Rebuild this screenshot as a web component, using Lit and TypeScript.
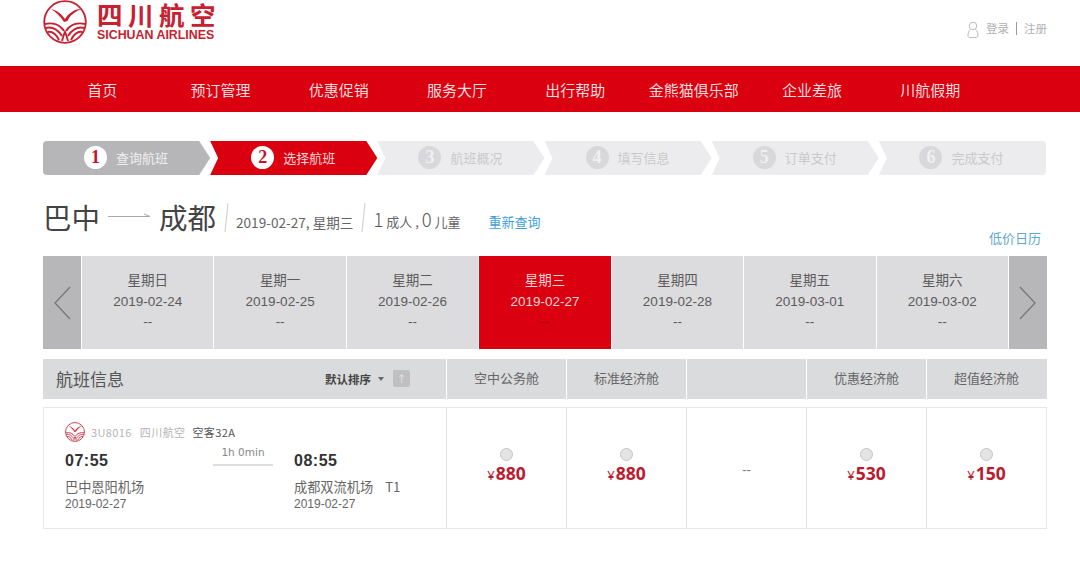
import { LitElement, html, css, svg } from "lit";
import { customElement } from "lit/decorators.js";

const NAV = ["首页", "预订管理", "优惠促销", "服务大厅", "出行帮助", "金熊猫俱乐部", "企业差旅", "川航假期"];
const STEPS = ["查询航班", "选择航班", "航班概况", "填写信息", "订单支付", "完成支付"];
const DAYS = [
  ["星期日", "2019-02-24"],
  ["星期一", "2019-02-25"],
  ["星期二", "2019-02-26"],
  ["星期三", "2019-02-27"],
  ["星期四", "2019-02-28"],
  ["星期五", "2019-03-01"],
  ["星期六", "2019-03-02"],
];
const CABINS = ["空中公务舱", "标准经济舱", "", "优惠经济舱", "超值经济舱"];
const PRICES = ["880", "880", "", "530", "150"];

const logo = (size: number) => html`<svg class="logo" width=${size} height=${size} viewBox="0 0 44 44" fill="none">
  ${svg`<circle cx="22" cy="22" r="20.8" stroke="#c8202f" stroke-width="1.800" fill="#fff"/>
  <path d="M8 9 C13 10 18 13 22 19 C25 14 31 9 38 9 C32 12 27 15 24.500 21 L21 22 C17 16 13 12 8 9Z" fill="#c8202f"/>
  <g stroke="#c8202f" stroke-width="1.900" fill="none">
    <path d="M2 24 C10 22 17 25 21 31"/>
    <path d="M2.500 28 C10 26 15 30 19 36"/>
    <path d="M4.500 32 C9 31 13 34 16 40"/>
    <path d="M42 24 C34 22 27 25 23 31"/>
    <path d="M41.500 28 C34 26 29 30 25 36"/>
    <path d="M39.500 32 C35 31 31 34 28 40"/>
    <path d="M19 41 C20 37 21 34 22 32 C23 34 24 37 25 41"/>
  </g>`}
</svg>`;

@customElement("app-root")
export class AppRoot extends LitElement {
  static styles = css`
    :host {
      display: block;
      width: 1080px;
      height: 567px;
      overflow: hidden;
      background: #fff;
      font-family: "Noto Sans CJK SC", "Liberation Sans", sans-serif;
      color: #555;
      font-size: 13px;
    }
    .top {
      height: 66px;
      box-sizing: border-box;
      padding: 0 33px 0 43px;
      display: flex;
      justify-content: space-between;
    }
    .brand {
      display: flex;
      gap: 10px;
      align-items: flex-start;
    }
    .brand-text {
      display: flex;
      flex-direction: column;
    }
    .brand-cn {
      font-size: 25.500px;
      line-height: 27px;
      height: 27px;
      font-weight: 700;
      color: #c8202f;
      letter-spacing: 5.500px;
      white-space: nowrap;
    }
    .brand-en {
      font-family: "Liberation Sans", sans-serif;
      font-size: 12.400px;
      line-height: 13px;
      margin-top: 2px;
      font-weight: 700;
      color: #c8202f;
      white-space: nowrap;
    }
    .user {
      display: flex;
      align-items: center;
      height: 20px;
      margin-top: 18px;
      font-size: 11.500px;
      color: #b0b0b0;
      gap: 4px;
    }
    .user i {
      width: 1px;
      height: 13px;
      background: #999;
      margin: 0 3px;
    }
    .user svg {
      margin-right: 3px;
      margin-top: 3px;
    }
    nav {
      height: 46px;
      background: #da0010;
      color: #f6dcdc;
      padding-left: 43px;
      display: flex;
      font-size: 15px;
    }
    nav a {
      width: 118.300px;
      display: flex;
      align-items: center;
      justify-content: center;
      white-space: nowrap;
    }
    .steps {
      margin: 29px 34px 0 43px;
      display: grid;
      grid-template-columns: repeat(6, 1fr);
      height: 34px;
    }
    .step {
      display: flex;
      align-items: center;
      justify-content: center;
      gap: 9px;
      font-size: 13px;
      color: #c9c9cb;
      background: #ececee;
      margin-right: -1px;
      padding: 0 2px 2px 0;
      box-sizing: border-box;
      clip-path: polygon(0 0, calc(100% - 12px) 0, calc(100% - 1px) 50%, calc(100% - 12px) 100%, 0 100%, 8px 50%);
    }
    .step.s0 {
      background: #b6b6b9;
      color: #eee;
      clip-path: polygon(0 0, calc(100% - 12px) 0, calc(100% - 1px) 50%, calc(100% - 12px) 100%, 0 100%);
      border-radius: 4px 0 0 4px;
    }
    .step.s1 {
      background: #da0010;
      color: #f7d8d8;
    }
    .step.s5 {
      clip-path: polygon(0 0, 100% 0, 100% 100%, 0 100%, 8px 50%);
      border-radius: 0 4px 4px 0;
      margin-right: 0;
    }
    .step b {
      width: 23px;
      height: 23px;
      border-radius: 50%;
      background: #d8d8da;
      color: #f0f0f2;
      display: flex;
      align-items: center;
      justify-content: center;
      font: 700 18px "Liberation Serif", serif;
    }
    .step.s0 b,
    .step.s1 b {
      background: #fff;
      color: #c8102a;
    }
    .summary {
      margin: 22px 33px 0 43px;
      height: 59px;
      display: flex;
      position: relative;
      align-items: flex-start;
    }
    .city {
      font-size: 28.500px;
      line-height: 40px;
      color: #444;
      font-weight: 400;
    }
    .arrow {
      margin: 14px 8px 0 8px;
    }
    .sep {
      width: 1px;
      height: 29px;
      background: #ccc;
      margin: 6px 9px 0 10px;
      transform: rotate(6deg);
    }
    .date {
      font-size: 13.600px;
      color: #666;
      line-height: 40px;
      margin-top: 5px;
      white-space: nowrap;
    }
    .pax {
      color: #666;
      font-size: 13px;
      line-height: 40px;
      margin-top: 2px;
      white-space: nowrap;
    }
    .pax em {
      font-style: normal;
      font-size: 18.500px;
      color: #555;
      font-weight: 300;
    }
    .requery {
      color: #3f9fd6;
      margin: 5px 0 0 28px;
      line-height: 40px;
      font-size: 13px;
    }
    .cal {
      position: absolute;
      right: 0;
      top: 31px;
      color: #5fa8d0;
      font-size: 13px;
      line-height: 20px;
      margin-right: 6px;
    }
    .days {
      margin: 0 33px 0 43px;
      height: 93px;
      display: flex;
      gap: 1px;
    }
    .pager {
      width: 38px;
      background: #b7b6b9;
      display: flex;
      align-items: center;
      justify-content: center;
      flex: none;
    }
    .day {
      flex: 1;
      background: #dcdbdd;
      text-align: center;
      color: #5b5b5b;
      font-size: 13.500px;
      line-height: 20.500px;
      padding-top: 15px;
      box-sizing: border-box;
      font-family: "Liberation Sans", "Noto Sans CJK SC", sans-serif;
    }
    .day.on {
      background: #da0010;
      color: #f3d3d3;
    }
    .day.on .dash {
      color: #a5000c;
    }
    .thead {
      margin: 10px 33px 0 43px;
      height: 40px;
      display: grid;
      grid-template-columns: 403px repeat(5, 120px);
      background: #dadbdc;
    }
    .thead > div {
      display: flex;
      align-items: center;
      justify-content: center;
      border-left: 1px solid #fff;
      font-size: 13px;
      color: #666;
      padding-bottom: 3px;
      box-sizing: border-box;
    }
    .thead .info {
      border-left: 0;
      justify-content: flex-start;
      padding: 0 36px 1px 13px;
    }
    .info h3 {
      font-size: 17px;
      font-weight: 400;
      margin: 0;
      flex: 1;
      color: #555;
    }
    .sort {
      font-size: 11.500px;
      font-weight: 700;
      color: #444;
      white-space: nowrap;
    }
    .caret {
      width: 0;
      height: 0;
      border: 3.500px solid transparent;
      border-top: 4px solid #666;
      border-bottom: 0;
      margin: 0 9px 0 7px;
    }
    .sortbox {
      width: 17px;
      height: 17px;
      background: #c0c0c2;
      border-radius: 2px;
      color: #e6e6e6;
      font-size: 10px;
      display: flex;
      align-items: center;
      justify-content: center;
    }
    .row {
      margin: 8px 33px 0 43px;
      height: 122px;
      box-sizing: border-box;
      border: 1px solid #e6e6e8;
      display: grid;
      grid-template-columns: 402px repeat(5, 120px);
    }
    .flight {
      padding: 14px 0 0 21px;
      display: flex;
      flex-direction: column;
      color: #666;
    }
    .meta {
      display: flex;
      align-items: center;
      font-size: 11px;
      letter-spacing: 0.400px;
      height: 20px;
      color: #b5b5b5;
      white-space: nowrap;
    }
    .meta .logo {
      margin-right: 6px;
    }
    .meta span {
      margin-right: 8px;
    }
    .meta .plane {
      color: #555;
      margin-left: -1px;
    }
    .ends {
      display: grid;
      grid-template-columns: 142px 87px 1fr;
      margin-top: 7px;
    }
    .time {
      font: 700 16px/24px "Liberation Sans", sans-serif;
      color: #333;
      letter-spacing: 0.500px;
    }
    .airport {
      font-size: 13.200px;
      line-height: 18px;
      margin-top: 5px;
      color: #666;
      white-space: nowrap;
    }
    .airport em {
      font-style: normal;
      margin-left: 12px;
    }
    .dt {
      font: 12px/16px "Liberation Sans", sans-serif;
      color: #666;
    }
    .mid {
      margin: -4px 0 0 6px;
      width: 60px;
    }
    .dur {
      font: 10.500px/14px "DejaVu Sans", sans-serif;
      color: #888;
      text-align: center;
      white-space: nowrap;
    }
    .dur-line {
      height: 2px;
      background: #dedee0;
      margin-top: 5px;
    }
    .price {
      border-left: 1px solid #e2e2e4;
      display: flex;
      flex-direction: column;
      align-items: center;
      justify-content: center;
      box-sizing: border-box;
      padding-bottom: 2px;
    }
    .radio {
      width: 11px;
      height: 11px;
      border-radius: 50%;
      background: #e4e4e4;
      border: 1px solid #c4c4c4;
      margin-left: -1px;
    }
    .amt {
      font: 700 17.500px/24px "Noto Sans", sans-serif;
      color: #bb1a2e;
    }
    .amt small {
      font-size: 13px;
      font-weight: 400;
      margin-right: 1px;
    }
    .none {
      color: #777;
      font-family: "Liberation Sans", sans-serif;
      font-size: 13px;
      margin-top: 4px;
    }
  `;

  render() {
    const chev = (d: string) => html`<svg width="18" height="36" viewBox="0 0 18 36" fill="none"><path d=${d} stroke="#77777a" stroke-width="1.300"/></svg>`;
    return html`
      <header class="top">
        <div class="brand">
          ${logo(44)}
          <div class="brand-text">
            <div class="brand-cn">四川航空</div>
            <div class="brand-en">SICHUAN AIRLINES</div>
          </div>
        </div>
        <div class="user">
          <svg width="12" height="17" viewBox="0 0 12 17" fill="none" stroke="#bbb" stroke-width="1"><circle cx="6" cy="5" r="3.800"/><path d="M3.500 8.500 C1.500 10 1 12 1 15 C1 16 2 16.500 3 16.500 H9 C10 16.500 11 16 11 15 C11 12 10.500 10 8.500 8.500"/></svg>
          <span>登录</span><i></i><span>注册</span>
        </div>
      </header>
      <nav>${NAV.map((n) => html`<a>${n}</a>`)}</nav>
      <div class="steps">
        ${STEPS.map((s, i) => html`<div class="step s${i}"><b>${i + 1}</b><span>${s}</span></div>`)}
      </div>
      <div class="summary">
        <span class="city">巴中</span>
        <svg class="arrow" width="43" height="10" viewBox="0 0 43 10" fill="none" stroke="#aaa"><path d="M0 5.500 H42 L36 3"/></svg>
        <span class="city">成都</span>
        <i class="sep"></i>
        <span class="date">2019-02-27, 星期三</span>
        <i class="sep"></i>
        <span class="pax"><em>1</em> 成人 , <em>0</em> 儿童</span>
        <a class="requery">重新查询</a>
        <a class="cal">低价日历</a>
      </div>
      <div class="days">
        <div class="pager">${chev("M17 2 L2 18 L17 34")}</div>
        ${DAYS.map((d, i) => html`<div class="day ${i === 3 ? "on" : ""}"><div>${d[0]}</div><div>${d[1]}</div><div class="dash">--</div></div>`)}
        <div class="pager">${chev("M1 2 L16 18 L1 34")}</div>
      </div>
      <div class="thead">
        <div class="info"><h3>航班信息</h3><span class="sort">默认排序</span><i class="caret"></i><span class="sortbox">↑</span></div>
        ${CABINS.map((c) => html`<div>${c}</div>`)}
      </div>
      <div class="row">
        <div class="flight">
          <div class="meta">${logo(20)}<span>3U8016</span><span>四川航空</span><span class="plane">空客32A</span></div>
          <div class="ends">
            <div>
              <div class="time">07:55</div>
              <div class="airport">巴中恩阳机场</div>
              <div class="dt">2019-02-27</div>
            </div>
            <div class="mid">
              <div class="dur">1h 0min</div>
              <div class="dur-line"></div>
            </div>
            <div>
              <div class="time">08:55</div>
              <div class="airport">成都双流机场<em>T1</em></div>
              <div class="dt">2019-02-27</div>
            </div>
          </div>
        </div>
        ${PRICES.map((p) =>
          p
            ? html`<div class="price"><i class="radio"></i><div class="amt"><small>¥</small>${p}</div></div>`
            : html`<div class="price"><span class="none">--</span></div>`
        )}
      </div>
    `;
  }
}
